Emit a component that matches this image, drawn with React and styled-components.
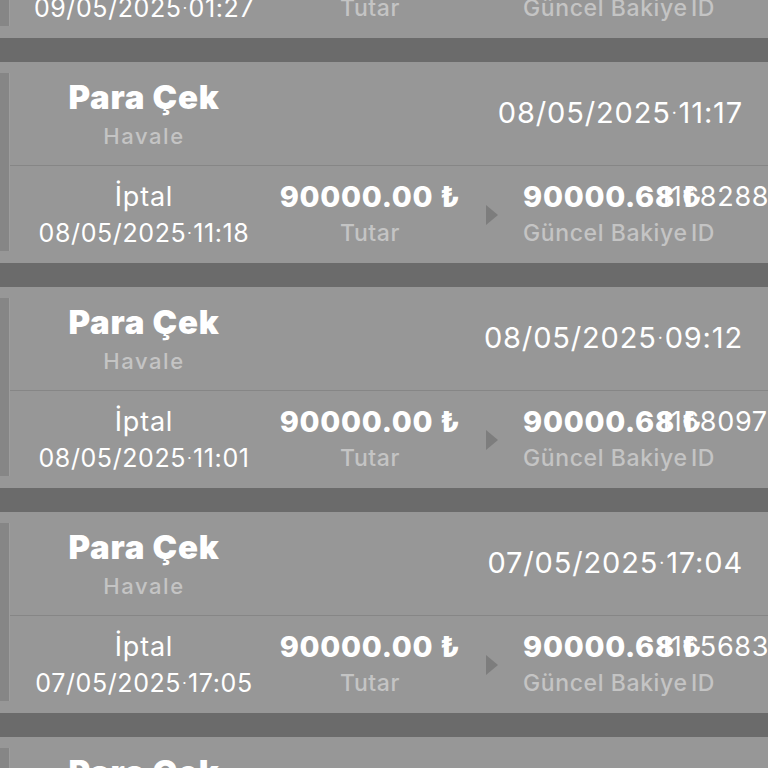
import React from "react";
import styled, { createGlobalStyle } from "styled-components";

const Global = createGlobalStyle`
  html, body { margin: 0; padding: 0; background: #6b6b6b; }
  body { width: 768px; height: 768px; overflow: hidden; font-family: Inter, "Noto Sans", "DejaVu Sans", sans-serif; }
`;

const List = styled.div`
  display: flex;
  flex-direction: column;
  gap: 24px;
  margin-top: -163px;
`;

const Card = styled.div`
  display: flex;
  height: 201px;
  background: #979797;
`;

const Stripe = styled.div`
  width: 9px;
  margin: 11px 0 12px;
  background: #868686;
  border-right: 1px solid #9d9d9d;
  flex-shrink: 0;
`;

const Body = styled.div`
  flex: 1;
  display: flex;
  flex-direction: column;
`;

const Top = styled.div`
  height: 103px;
  display: flex;
  align-items: center;
  padding-right: 26px;
  border-bottom: 1px solid #868686;
`;

const Bottom = styled.div`
  flex: 1;
  display: flex;
  align-items: center;
  padding-right: 22px;
`;

const Cell = styled.div`
  width: ${(p) => p.$w}px;
  flex-shrink: 0;
  text-align: center;
  white-space: nowrap;
`;

const Title = styled.div`
  font-size: 33px;
  line-height: 36px;
  font-weight: 900;
  color: #fff;
  letter-spacing: 0.75px;
`;

const Sub = styled.div`
  margin-top: 8px;
  font-size: 22px;
  line-height: 26px;
  font-weight: 500;
  color: #c4c4c4;
  letter-spacing: 1.6px;
`;

const TopDate = styled.div`
  flex: 1;
  text-align: right;
  font-size: 29px;
  line-height: 34px;
  color: #fff;
  letter-spacing: 0.85px;
`;

const Status = styled.div`
  font-size: 27px;
  line-height: 32px;
  color: #fff;
  letter-spacing: 0.8px;
`;

const Value = styled.div`
  font-size: ${(p) => (p.$bold ? 29 : 27)}px;
  line-height: 32px;
  font-weight: ${(p) => (p.$bold ? 800 : 400)};
  color: #fff;
  letter-spacing: 0.7px;
`;

const Label = styled.div`
  margin-top: 5px;
  font-size: ${(p) => (p.$small ? 23 : 25)}px;
  line-height: 30px;
  font-weight: ${(p) => (p.$small ? 500 : 400)};
  color: ${(p) => (p.$muted ? "#c4c4c4" : "#fff")};
  letter-spacing: 0.6px;
`;

const Dot = styled.span`
  margin: 0 1px;
  font-size: 0.6em;
  vertical-align: 0.25em;
`;

const ArrowCell = styled.div`
  width: 61px;
  flex-shrink: 0;
  display: flex;
  justify-content: center;
  padding-right: 2px;
  box-sizing: border-box;
`;

const Arrow = () => (
  <svg width="12" height="20" viewBox="0 0 12 20">
    <path d="M0 0 L12 10 L0 20 Z" fill="#7d7d7d" />
  </svg>
);

const DateText = ({ d, t }) => (
  <>
    {d}
    <Dot>·</Dot>
    {t}
  </>
);

const rows = [
  { top: ["09/05/2025", "01:26"], bottom: ["09/05/2025", "01:27"], id: "1169402" },
  { top: ["08/05/2025", "11:17"], bottom: ["08/05/2025", "11:18"], id: "1168288" },
  { top: ["08/05/2025", "09:12"], bottom: ["08/05/2025", "11:01"], id: "1168097" },
  { top: ["07/05/2025", "17:04"], bottom: ["07/05/2025", "17:05"], id: "1165683" },
  { top: ["07/05/2025", "16:40"], bottom: ["07/05/2025", "16:41"], id: "1165590" },
];

export default function App() {
  return (
    <>
      <Global />
      <List>
        {rows.map((r, i) => (
          <Card key={i}>
            <Stripe />
            <Body>
              <Top>
                <Cell $w={268}>
                  <Title>Para Çek</Title>
                  <Sub>Havale</Sub>
                </Cell>
                <TopDate>
                  <DateText d={r.top[0]} t={r.top[1]} />
                </TopDate>
              </Top>
              <Bottom>
                <Cell $w={268}>
                  <Status>İptal</Status>
                  <Label>
                    <DateText d={r.bottom[0]} t={r.bottom[1]} />
                  </Label>
                </Cell>
                <Cell $w={184}>
                  <Value $bold>90000.00 ₺</Value>
                  <Label $muted $small>Tutar</Label>
                </Cell>
                <ArrowCell>
                  <Arrow />
                </ArrowCell>
                <Cell $w={136}>
                  <Value $bold>90000.68 ₺</Value>
                  <Label $muted $small>Güncel Bakiye</Label>
                </Cell>
                <Cell $w={88}>
                  <Value>{r.id}</Value>
                  <Label $muted $small>ID</Label>
                </Cell>
              </Bottom>
            </Body>
          </Card>
        ))}
      </List>
    </>
  );
}
